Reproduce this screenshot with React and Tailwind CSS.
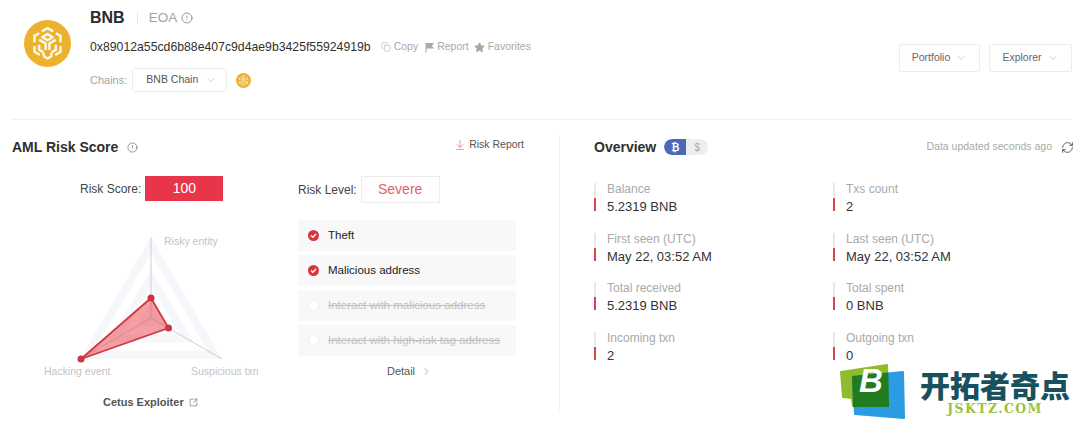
import { ChevronDown, ChevronRight, Copy, Star, CircleAlert, RefreshCw, ArrowDownToLine, SquareArrowOutUpRight } from 'lucide-react'

const overview = [
  { label: 'Balance', value: '5.2319 BNB' },
  { label: 'Txs count', value: '2' },
  { label: 'First seen (UTC)', value: 'May 22, 03:52 AM' },
  { label: 'Last seen (UTC)', value: 'May 22, 03:52 AM' },
  { label: 'Total received', value: '5.2319 BNB' },
  { label: 'Total spent', value: '0 BNB' },
  { label: 'Incoming txn', value: '2' },
  { label: 'Outgoing txn', value: '0' },
]

const riskItems = [
  { label: 'Theft', on: true },
  { label: 'Malicious address', on: true },
  { label: 'Interact with malicious address', on: false },
  { label: 'Interact with high-risk tag address', on: false },
]

function BnbLogo({ size }) {
  return (
    <svg width={size} height={size} viewBox="0 0 46 46">
      <circle cx="23" cy="23" r="23" fill="#ecb22e" />
      <g transform="translate(23 23) scale(1.25) translate(-23 -23)" fill="none" stroke="#fff" strokeWidth="1.9" strokeLinejoin="round" opacity="0.92">
        <path d="M18.5 13.5 L23 11 L27.5 13.5" />
        <path d="M19 18 L23 15.6 L27 18 L23 20.4 Z" />
        <path d="M12.8 22 V17 L16.5 15" />
        <path d="M33.2 22 V17 L29.5 15" />
        <path d="M12.8 25 V29.5 L17 32" />
        <path d="M33.2 25 V29.5 L29 32" />
        <path d="M16.5 20 L21.5 23 V28" />
        <path d="M29.5 20 L24.5 23 V28" />
        <path d="M16.5 24 V28 L20 30" />
        <path d="M29.5 24 V28 L26 30" />
        <path d="M20 33 L23 34.8 L26 33 V30.5" />
        <path d="M20 33 V30.5" />
      </g>
    </svg>
  )
}

function FlagIcon() {
  return (
    <svg width="11" height="11" viewBox="0 0 11 11" className="text-[#a9a9a9]">
      <path d="M1.5 1 H10 L8 3.7 L10 6.5 H2.6 V10.5 H1.5 Z" fill="currentColor" />
    </svg>
  )
}

function CheckDot({ on }) {
  if (!on) return <span className="w-[11px] h-[11px] rounded-full bg-white border border-[#f0f0f0]" />
  return (
    <svg width="11" height="11" viewBox="0 0 11 11">
      <circle cx="5.5" cy="5.5" r="5.5" fill="#d9363e" />
      <path d="M3 5.6 L4.9 7.3 L8 4" fill="none" stroke="#fff" strokeWidth="1.3" />
    </svg>
  )
}

function Radar() {
  const scale = (k) => {
    const pts = [[151, 237], [222, 359], [80, 359]]
    return pts.map(([x, y]) => `${151 + (x - 151) * k},${318 + (y - 318) * k}`).join(' ')
  }
  return (
    <svg width="270" height="160" viewBox="12 225 270 160" className="block">
      <polygon points={scale(1)} fill="#f6f7fb" />
      <polygon points={scale(0.8)} fill="#fff" />
      <polygon points={scale(0.6)} fill="#f6f7fb" />
      <polygon points={scale(0.4)} fill="#fff" />
      <polygon points={scale(0.2)} fill="#f6f7fb" />
      <g stroke="#cfcfd2" strokeWidth="1">
        <line x1="151" y1="318" x2="151" y2="237" />
        <line x1="151" y1="318" x2="222" y2="359" />
        <line x1="151" y1="318" x2="80" y2="359" />
      </g>
      <polygon points="151,298 168.5,328 81,359" fill="#e8404a" fillOpacity="0.5" stroke="#cf3a44" strokeWidth="1.8" />
      <circle cx="151" cy="298" r="3.5" fill="#cf3540" />
      <circle cx="168.5" cy="328" r="3.5" fill="#cf3540" />
      <circle cx="81" cy="359" r="3.5" fill="#cf3540" />
      <g fill="#c4c4c4" fontSize="10.5">
        <text x="164" y="245">Risky entity</text>
        <text x="44" y="375">Hacking event</text>
        <text x="191" y="375">Suspicious txn</text>
      </g>
    </svg>
  )
}

function Watermark() {
  return (
    <div className="absolute left-[835px] top-[360px] flex items-start">
      <svg width="80" height="61" viewBox="835 360 80 61">
        <polygon points="841,372 887,365 888,406 853,406 852,398 843,397" fill="#8fbc2c" stroke="#8fbc2c" strokeWidth="2" strokeLinejoin="round" />
        <polygon points="853,377 903,372 904,418 855,414" fill="#2b9be3" stroke="#2b9be3" strokeWidth="2" strokeLinejoin="round" />
        <polygon points="852,376 888.3,372.6 889,407 853,407" fill="#217b1f" />
        <text x="859" y="392" fontSize="33" fontWeight="700" fontStyle="italic" fill="#fff">B</text>
      </svg>
      <div className="ml-[5px] flex flex-col items-center">
        <span className="mt-[6px] text-[30px] leading-[36px] font-black text-[#17505f] font-['Noto_Sans_CJK_SC',sans-serif]">开拓者奇点</span>
        <span className="text-[12.5px] leading-[13px] font-bold tracking-[1.4px] text-[#9cc13a] font-['DejaVu_Serif',serif]">JSKTZ.COM</span>
      </div>
    </div>
  )
}

export default function App() {
  return (
    <div className="relative w-[1080px] h-[421px] overflow-hidden bg-white font-['Liberation_Sans',sans-serif]">
      {/* Address header */}
      <header className="ml-3 mr-2 h-[120px] flex justify-between border-b border-[#f0f0f0]">
        <div className="flex">
          <div className="ml-3 mt-5">
            <BnbLogo size={47} />
          </div>
          <div className="ml-[19px] pt-2">
            <div className="flex items-center h-5">
              <span className="text-[16px] font-bold text-[#2b2b2b]">BNB</span>
              <span className="ml-[12px] w-px h-3 bg-[#e6e6e6]" />
              <span className="ml-[11px] text-[13.5px] text-[#a3a3a3]">EOA</span>
              <CircleAlert size={12} strokeWidth={1.5} className="ml-[4px] text-[#777]" />
            </div>
            <div className="flex items-center h-5 mt-[9px]">
              <span className="text-[12.25px] text-[#2f2f2f]">0x89012a55cd6b88e407c9d4ae9b3425f55924919b</span>
              <Copy size={10} className="ml-[10px] text-[#c4c4c4]" />
              <span className="ml-[3px] text-[10.5px] text-[#a9a9a9]">Copy</span>
              <span className="ml-[6px]"><FlagIcon /></span>
              <span className="ml-[2px] text-[10.5px] text-[#a9a9a9]">Report</span>
              <Star size={11} fill="currentColor" className="ml-[5px] text-[#a9a9a9]" />
              <span className="ml-[3px] text-[10.5px] text-[#a9a9a9]">Favorites</span>
            </div>
            <div className="flex items-center mt-[11px]">
              <span className="text-[11px] text-[#a3a3a3]">Chains:</span>
              <div className="ml-[5px] w-[95px] h-6 flex items-center pl-[13px] border border-[#ececec] rounded-[3px]">
                <span className="text-[10.5px] text-[#555]">BNB Chain</span>
                <ChevronDown size={12} strokeWidth={1} className="ml-[7px] text-[#999]" />
              </div>
              <span className="ml-[9px]"><BnbLogo size={15} /></span>
            </div>
          </div>
        </div>
        <div className="flex gap-[9px] mt-[44px]">
          <div className="w-[81px] h-7 flex items-center justify-center gap-[5px] border border-[#ececec] rounded-[2px]">
            <span className="text-[10.5px] text-[#666]">Portfolio</span>
            <ChevronDown size={12} strokeWidth={1} className="text-[#999]" />
          </div>
          <div className="w-[83px] h-7 flex items-center justify-center gap-[5px] border border-[#ececec] rounded-[2px]">
            <span className="text-[10.5px] text-[#666]">Explorer</span>
            <ChevronDown size={12} strokeWidth={1} className="text-[#999]" />
          </div>
        </div>
      </header>

      <main className="flex pt-[15px] pl-3">
        {/* AML risk */}
        <section className="w-[548px] h-[276px] border-r border-[#f3f3f3]">
          <div className="flex items-center h-6 pr-[35px]">
            <h2 className="text-[14px] font-bold text-[#2f2f2f]">AML Risk Score</h2>
            <CircleAlert size={11} strokeWidth={1.3} className="ml-[9px] text-[#555]" />
            <ArrowDownToLine size={12} strokeWidth={1} className="ml-auto text-[#d9363e] -mt-1" />
            <span className="ml-[3px] text-[10.5px] text-[#555] -mt-1">Risk Report</span>
          </div>
          <div className="flex mt-[17px]">
            <div className="w-[286px]">
              <div className="flex items-center pl-[68px]">
                <span className="text-[12px] text-[#444]">Risk Score:</span>
                <span className="ml-[4px] w-[78px] h-[25px] flex items-center justify-center bg-[#e8354a] text-white text-[14px]">100</span>
              </div>
              <div className="mt-6">
                <Radar />
              </div>
              <div className="flex items-center mt-[9px] pl-[91px]">
                <span className="text-[11px] font-bold text-[#555]">Cetus Exploiter</span>
                <SquareArrowOutUpRight size={9} strokeWidth={1.5} className="ml-[5px] text-[#555]" />
              </div>
            </div>
            <div className="w-[218px]">
              <div className="flex items-center">
                <span className="text-[12px] text-[#444]">Risk Level:</span>
                <span className="ml-[4px] w-[79px] h-[27px] flex items-center justify-center border border-[#ececec] text-[14px] text-[#e2606a]">Severe</span>
              </div>
              <ul className="mt-[17px] flex flex-col gap-1">
                {riskItems.map((item) => (
                  <li key={item.label} className="h-[31px] flex items-center gap-[9px] pl-[10px] bg-[#f8f8f8]">
                    <CheckDot on={item.on} />
                    <span className={item.on ? 'text-[11.5px] text-[#222]' : 'text-[11.5px] text-[#c0c0c0] line-through'}>{item.label}</span>
                  </li>
                ))}
              </ul>
              <div className="flex items-center justify-center mt-[7px] pl-[5px]">
                <span className="text-[11px] text-[#555]">Detail</span>
                <ChevronRight size={11} strokeWidth={1.2} className="ml-[6px] text-[#666]" />
              </div>
            </div>
          </div>
        </section>

        {/* Overview */}
        <section className="ml-[34px] w-[480px]">
          <div className="flex items-center h-6">
            <h2 className="text-[14px] font-bold text-[#2f2f2f]">Overview</h2>
            <div className="ml-2 flex h-4 w-11 rounded-full bg-[#eeeeee] overflow-hidden">
              <span className="w-[22px] flex items-center justify-center rounded-l-full bg-[#4a69b8] text-white text-[10px] font-bold">₿</span>
              <span className="w-[22px] flex items-center justify-center text-[#a9a9a9] text-[10px]">$</span>
            </div>
            <span className="ml-auto text-[10.5px] text-[#a9a9a9]">Data updated seconds ago</span>
            <RefreshCw size={13} strokeWidth={1.5} className="ml-[9px] text-[#444]" />
          </div>
          <div className="mt-[21px] grid grid-cols-[239px_1fr] gap-y-[13.67px]">
            {overview.map((item) => (
              <div key={item.label} className="flex h-9">
                <div className="mt-[3px] w-[2px] h-7 flex flex-col">
                  <span className="h-[15px] bg-[#e8e8e8]" />
                  <span className="h-[13px] bg-[#d9424c]" />
                </div>
                <div className="ml-[11px]">
                  <div className="text-[12px] leading-[18px] text-[#a9a9a9]">{item.label}</div>
                  <div className="text-[13px] leading-[18px] text-[#333]">{item.value}</div>
                </div>
              </div>
            ))}
          </div>
        </section>
      </main>

      <Watermark />
    </div>
  )
}
